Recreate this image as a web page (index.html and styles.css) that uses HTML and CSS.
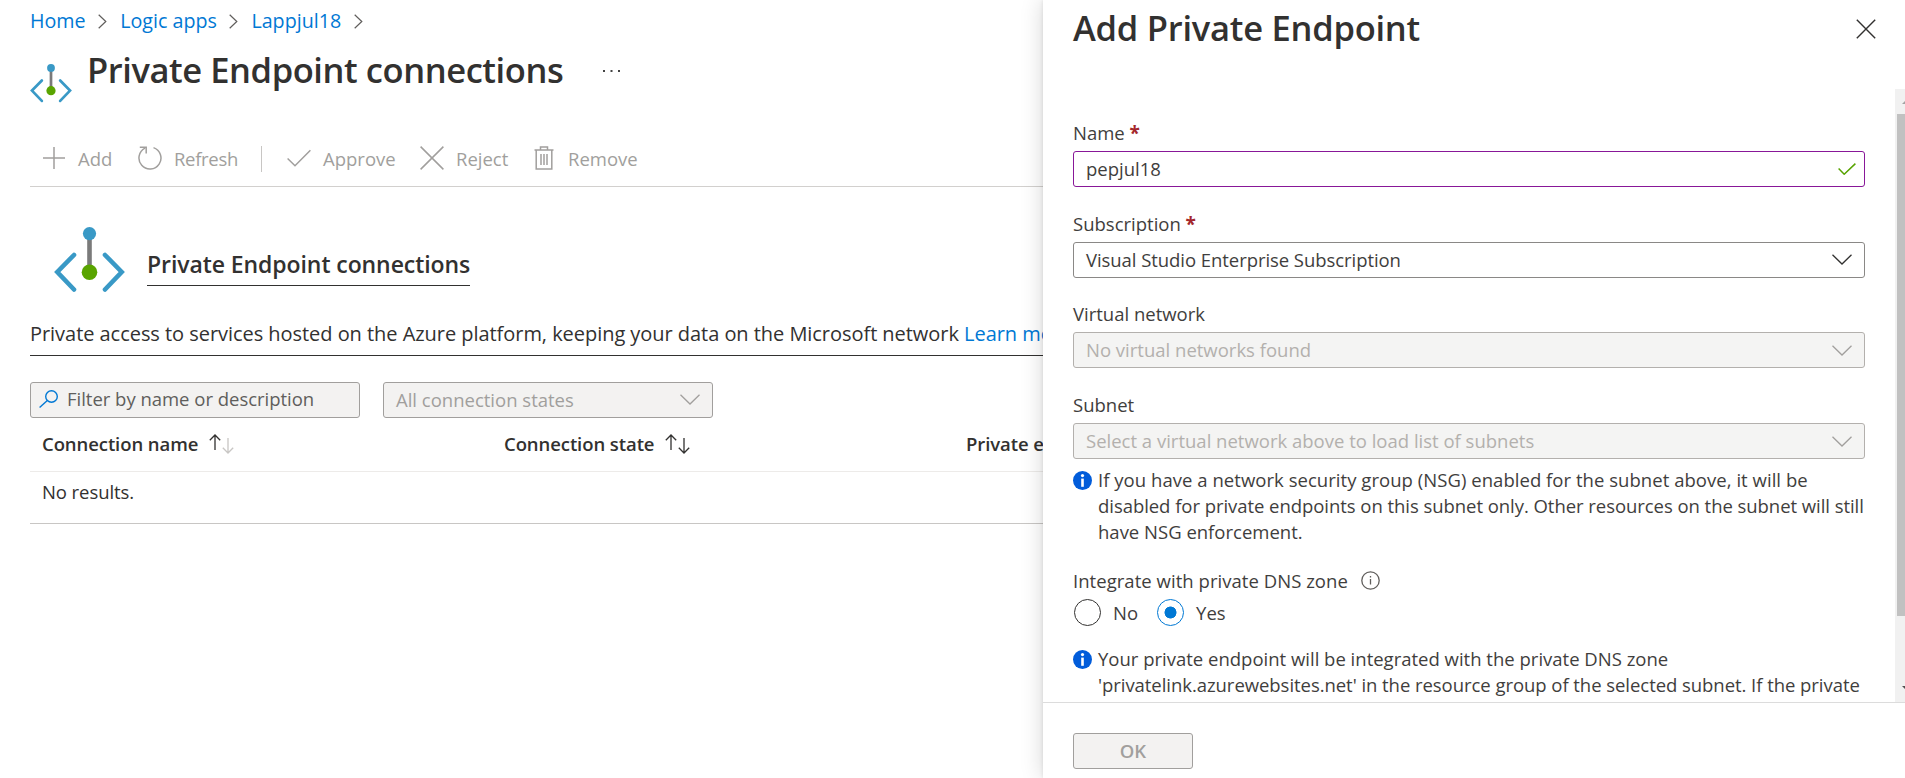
FILE: index.html
```html
<!DOCTYPE html>
<html lang="en">
<head>
<meta charset="utf-8">
<title>Private Endpoint connections</title>
<link rel="stylesheet" href="styles.css">
</head>
<body>
<svg class="defs" width="0" height="0">
  <symbol id="endpoint" viewBox="0 0 70 66">
    <path d="M35 8V44" stroke="#7a7a7a" stroke-width="4.6"/>
    <circle cx="35" cy="6.6" r="6.6" fill="#3999c6"/>
    <circle cx="35" cy="45.2" r="7.8" fill="#59a400"/>
    <path d="M19.5 28L2.8 45L19.5 62.500M50.500 28L67.200 45L50.500 62.500" fill="none" stroke="#3999c6" stroke-width="4.6" stroke-linecap="round" stroke-linejoin="miter"/>
  </symbol>
  <symbol id="chev" viewBox="0 0 20 11"><path d="M.5 .8L10 10L19.500 .8" fill="none" stroke="currentColor" stroke-width="1.300"/></symbol>
  <symbol id="crumb" viewBox="0 0 9 15"><path d="M.7 .7L7.800 7.500L.7 14.300" fill="none" stroke="currentColor" stroke-width="1.200"/></symbol>
  <symbol id="sort-up" viewBox="0 0 12 16"><path d="M6 16V1M.8 6.300L6 1L11.200 6.300" fill="none" stroke="currentColor" stroke-width="1.300"/></symbol>
  <symbol id="info" viewBox="0 0 19 19"><circle cx="9.500" cy="9.500" r="9.500" fill="#015cda"/><circle cx="9.500" cy="4.600" r="1.600" fill="#fff"/><path d="M9.500 7.600V15.800" stroke="#fff" stroke-width="2.600"/></symbol>
</svg>
<main class="main">
  <nav class="crumbs">
    <a>Home</a><svg><use href="#crumb"/></svg>
    <a>Logic apps</a><svg><use href="#crumb"/></svg>
    <a>Lappjul18</a><svg><use href="#crumb"/></svg>
  </nav>
  <header class="head">
    <svg class="head-icon"><use href="#endpoint"/></svg>
    <h1 class="title">Private Endpoint connections</h1>
    <svg class="more" viewBox="0 0 17 3"><path d="M0 0h2v2H0zM7.500 0h2v2h-2zM15 0h2v2h-2z" fill="#444"/></svg>
  </header>
  <div class="toolbar">
    <div class="tool"><svg viewBox="0 0 24 24"><path d="M12 1V23M1 12H23" /></svg><span>Add</span></div>
    <div class="tool"><svg viewBox="0 0 24 24"><path d="M15.500 1.600A11 11 0 1 1 7 2.200M1.800 1.200H8.200V7.600"/></svg><span class="refresh">Refresh</span></div>
    <div class="divider"></div>
    <div class="tool"><svg viewBox="0 0 24 24"><path d="M.6 12.500L8 19.800L23.400 4.200"/></svg><span>Approve</span></div>
    <div class="tool"><svg viewBox="0 0 24 24"><path d="M.6 .6L23.400 23.400M23.400 .6L.6 23.400"/></svg><span>Reject</span></div>
    <div class="tool"><svg class="trash" viewBox="0 0 20 24"><path d="M.5 4H19.500M6.500 4V1H13.500V4M2.200 4V23H17.800V4M7 8V19M10 8V19M13 8V19"/></svg><span>Remove</span></div>
  </div>
  <div class="hero">
    <svg class="hero-icon"><use href="#endpoint"/></svg>
    <h2 class="hero-title">Private Endpoint connections</h2>
  </div>
  <p class="desc">Private access to services hosted on the Azure platform, keeping your data on the Microsoft network <a>Learn more</a></p>
  <div class="filters">
    <div class="box filter"><svg class="search" viewBox="0 0 19 18"><circle cx="12.500" cy="6.500" r="5.800"/><path d="M8.300 10.500L.6 17.500"/></svg><span>Filter by name or description</span></div>
    <div class="box off"><span>All connection states</span><svg class="chev"><use href="#chev"/></svg></div>
  </div>
  <div class="row thead">
    <div class="th"><span>Connection name</span><svg class="sort"><use href="#sort-up"/></svg><svg class="sort down dim"><use href="#sort-up"/></svg></div>
    <div class="th"><span>Connection state</span><svg class="sort"><use href="#sort-up"/></svg><svg class="sort down"><use href="#sort-up"/></svg></div>
    <div class="th"><span>Private endpoint</span></div>
  </div>
  <div class="row empty">No results.</div>
</main>
<aside class="panel">
  <header class="panel-head">
    <h1 class="title">Add Private Endpoint</h1>
    <svg class="close" viewBox="0 0 20 20"><path d="M.8 .8L19.200 19.200M19.200 .8L.8 19.200"/></svg>
  </header>
  <div class="scroll">
    <div class="form">
      <div class="field"><label>Name <b>*</b></label>
        <div class="box valid"><span>pepjul18</span><svg class="ok" viewBox="0 0 18 12"><path d="M.6 5.500L6.200 11.200L17.400 .6"/></svg></div></div>
      <div class="field"><label>Subscription <b>*</b></label>
        <div class="box select"><span>Visual Studio Enterprise Subscription</span><svg class="chev"><use href="#chev"/></svg></div></div>
      <div class="field"><label>Virtual network</label>
        <div class="box off"><span>No virtual networks found</span><svg class="chev"><use href="#chev"/></svg></div></div>
      <div class="field"><label>Subnet</label>
        <div class="box off"><span>Select a virtual network above to load list of subnets</span><svg class="chev"><use href="#chev"/></svg></div></div>
      <div class="note"><svg><use href="#info"/></svg><p><span class="wide">If you have a network security group (NSG) enabled for the subnet above, it will be</span><br><span class="tight">disabled for private endpoints on this subnet only. Other resources on the subnet will still</span><br>have NSG enforcement.</p></div>
      <div class="dns"><span class="wide">Integrate with private DNS zone</span><svg viewBox="0 0 19 19"><circle cx="9.500" cy="9.500" r="8.700"/><path d="M9.500 8V13.500M9.500 5V6.500"/></svg></div>
      <div class="radios"><i class="radio"></i><span>No</span><i class="radio on"></i><span>Yes</span></div>
      <div class="note second"><svg><use href="#info"/></svg><p>Your private endpoint will be integrated with the private DNS zone<br><span class="tight">'privatelink.azurewebsites.net' in the resource group of the selected subnet. If the private</span></p></div>
    </div>
    <div class="bar"><svg class="arrow" viewBox="0 0 8 4"><path d="M0 4L4 0L8 4z" fill="#a3a3a3"/></svg><div class="thumb"></div><svg class="arrow low" viewBox="0 0 8 4"><path d="M0 0L4 4L8 0z" fill="#505050"/></svg></div>
  </div>
  <footer class="foot"><div class="btn">OK</div></footer>
</aside>
</body>
</html>
```
FILE: styles.css
```css
* { box-sizing: border-box; margin: 0; padding: 0; }
body { width: 1905px; height: 778px; overflow: hidden; display: flex; background: #fff; color: #323130; font: 18.5px/26px "Open Sans", "Noto Sans", sans-serif; }
.defs { position: absolute; }
svg { flex: none; display: block; }
a { color: #0078d4; }
span, a, h1, h2 { white-space: nowrap; }
.main { width: 1043px; flex: none; overflow: hidden; padding: 7px 0 0 30px; }
.crumbs { display: flex; align-items: center; height: 28px; font-size: 19.7px; }
.crumbs svg { width: 9px; height: 15px; margin: 0 13px 0 12.5px; color: #605e5c; }
.head { display: flex; height: 58px; margin-top: 10px; }
.head-icon { width: 42px; height: 39px; margin-top: 19px; }
.title { font-size: 34.5px; line-height: 48px; font-weight: 600; letter-spacing: -.24px; }
.head .title { margin: 1px 0 0 15px; letter-spacing: -.42px; }
.more { width: 17px; height: 3px; margin: 25px 0 0 40px; }
.toolbar { display: grid; grid-template-columns: 95px 124px 25px 133px 114px auto; align-items: center; height: 84px; padding: 29px 0 0 12px; border-bottom: 1px solid #d2d0ce; color: #a19f9d; }
.tool { display: flex; align-items: center; gap: 11px; }
.tool svg { width: 24px; height: 24px; margin-left: 1px; margin-right: 1px; margin-top: -2px; fill: none; stroke: #a19f9d; stroke-width: 1.5; }
.tool:first-child svg { margin-left: 0; }
.tool .trash { width: 20px; margin-left: 1px; margin-right: 3px; }
.refresh { letter-spacing: -.31px; }
.divider { width: 1px; height: 26px; background: #c8c6c4; }
.hero { display: flex; height: 106px; padding: 40px 0 0 24px; }
.hero-icon { width: 71px; height: 66px; }
.hero-title { margin: 16px 0 0 22px; height: 43px; font-size: 23px; line-height: 42px; font-weight: 600; letter-spacing: -.08px; border-bottom: 1px solid #323130; }
.desc { height: 63px; padding-top: 27px; font-size: 20px; line-height: 28px; letter-spacing: -.045px; white-space: nowrap; border-bottom: 1px solid #323130; }
.filters { display: flex; gap: 23px; margin-top: 26px; }
.filters .box { width: 330px; }
.box { display: flex; align-items: center; height: 36px; padding: 0 12px 1px; border: 1px solid #8a8886; border-radius: 3px; background: #fff; }
.box.off, .box.filter { background: #f3f2f1; border-color: #a19f9d; color: #a19f9d; }
.box.filter { padding: 0 8px 2px; gap: 9px; color: #605e5c; letter-spacing: -.02px; }
.search { width: 19px; height: 18px; fill: none; stroke: #0078d4; stroke-width: 1.4; }
.chev { width: 20px; height: 11px; margin-left: auto; }
.row { padding-left: 12px; }
.thead { display: grid; grid-template-columns: 462px 462px auto; align-items: center; height: 54px; padding-bottom: 2px; border-bottom: 1px solid #edebe9; font-weight: 600; letter-spacing: -.08px; }
.th { display: flex; align-items: center; }
.sort { width: 12px; height: 16px; margin: -3px 0 0 11px; }
.sort.down { transform: rotate(180deg); margin: 5px 0 0 1px; }
.dim { color: #c8c6c4; }
.empty { height: 52px; padding-top: 7px; letter-spacing: -.08px; border-bottom: 1px solid #c8c6c4; }
.panel { position: relative; width: 862px; flex: none; background: #fff; display: flex; flex-direction: column; box-shadow: 0 0 22px rgba(0,0,0,.16), 0 0 4px rgba(0,0,0,.1); }
.panel-head { height: 89px; padding: 4px 29px 0 30px; display: flex; justify-content: space-between; }
.close { width: 20px; height: 20px; margin-top: 15px; fill: none; stroke: #323130; stroke-width: 1.4; }
.scroll { height: 614px; display: flex; justify-content: space-between; overflow: hidden; border-bottom: 1px solid #dcdcdc; color: #3f3e3d; }
.form { width: 822px; flex: none; padding: 30px 0 0 30px; }
.field { height: 90.7px; }
.field label { display: block; height: 32px; line-height: 28px; }
.field b { color: #a4262c; font-size: 19px; }
.form .select, .form .off { padding-bottom: 0; }
.box.valid { border-color: #881798; }
.ok { width: 18px; height: 12px; margin: 0 -4px 0 auto; fill: none; stroke: #57a300; stroke-width: 1.5; }
.select { letter-spacing: -.06px; }
.form .box.off { background: #f4f4f3; border-color: #b3b0ad; color: #b3b0ad; }
.form .chev { color: #323130; }
.form .off .chev { color: #a19f9d; }
.wide { letter-spacing: .04px; }
.tight { letter-spacing: -.05px; }
.note { display: flex; gap: 6px; margin-top: -15px; }
.note svg { width: 19px; height: 19px; margin-top: 4px; }
.dns { display: flex; align-items: center; gap: 13px; margin-top: 22px; height: 28px; }
.dns svg { width: 19px; height: 19px; fill: none; stroke: #605e5c; stroke-width: 1.3; }
.radios { display: flex; align-items: center; height: 30px; margin-top: 3px; }
.radio { width: 27px; height: 27px; border: 1px solid #323130; border-radius: 50%; margin: 0 12px 0 1px; }
.radio.on { border-color: #0078d4; margin-left: 19px; background: radial-gradient(circle, #0078d4 5.7px, transparent 6.3px); }
.note.second { margin-top: 18px; }
.bar { width: 10px; background: #f1f1f1; overflow: hidden; }
.thumb { margin-left: 2px; height: 502px; background: #c1c1c1; }
.arrow { width: 8px; height: 4px; margin: 11px 0 10px 7px; }
.arrow.low { margin-top: 70px; }
.foot { padding: 30px 0 0 30px; }
.btn { width: 120px; height: 36px; line-height: 34px; text-align: center; background: #f3f2f1; border: 1px solid #a19f9d; border-radius: 3px; color: #a19f9d; font-weight: 600; }
```
